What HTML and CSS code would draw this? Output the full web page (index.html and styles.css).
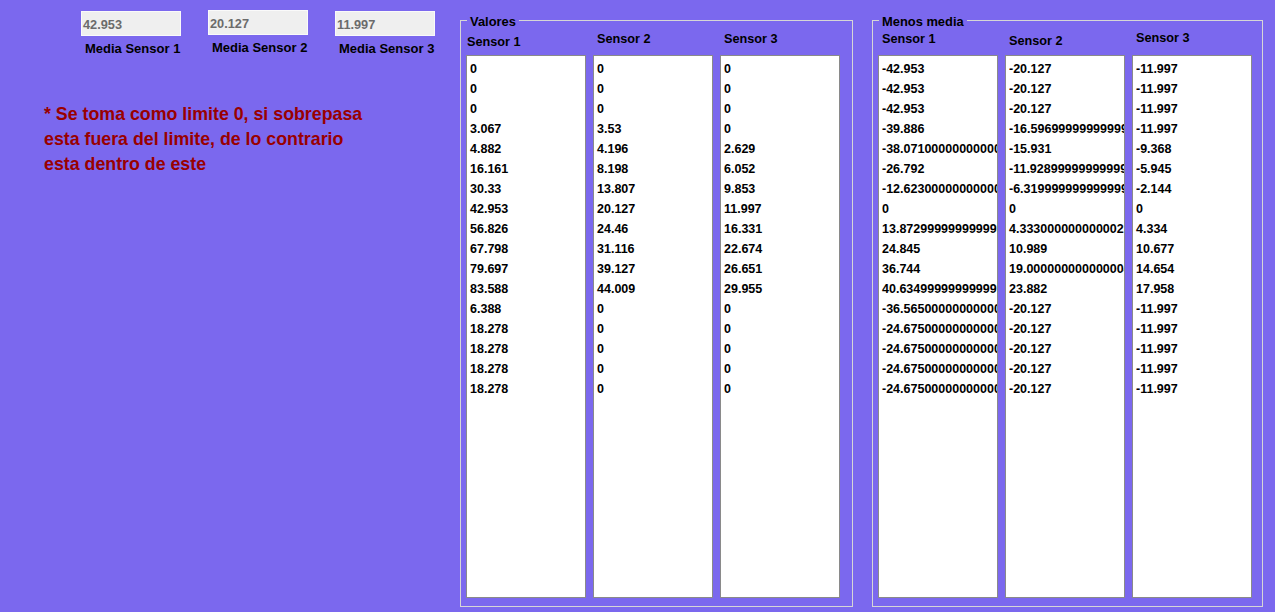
FILE: index.html
```html
<!DOCTYPE html>
<html lang="es">
<head>
<meta charset="utf-8">
<title>Sensores</title>
<link rel="stylesheet" href="styles.css">
</head>
<body>
<div class="app">
  <section class="means">
    <div class="mean-fields">
      <div class="mean">
        <div class="field">42.953</div>
        <div class="mean-label">Media Sensor 1</div>
      </div>
      <div class="mean">
        <div class="field field--up">20.127</div>
        <div class="mean-label">Media Sensor 2</div>
      </div>
      <div class="mean">
        <div class="field">11.997</div>
        <div class="mean-label">Media Sensor 3</div>
      </div>
    </div>
    <p class="note">* Se toma como limite 0, si sobrepasa<br>esta fuera del limite, de lo contrario<br>esta dentro de este</p>
  </section>

  <fieldset class="group group--values">
    <legend class="group-title">Valores</legend>
    <div class="cols">
      <div class="col">
        <div class="col-head col-head--first">Sensor 1</div>
        <div class="list">
          <div>0</div><div>0</div><div>0</div><div>3.067</div><div>4.882</div><div>16.161</div><div>30.33</div><div>42.953</div><div>56.826</div><div>67.798</div><div>79.697</div><div>83.588</div><div>6.388</div><div>18.278</div><div>18.278</div><div>18.278</div><div>18.278</div>
        </div>
      </div>
      <div class="col">
        <div class="col-head">Sensor 2</div>
        <div class="list">
          <div>0</div><div>0</div><div>0</div><div>3.53</div><div>4.196</div><div>8.198</div><div>13.807</div><div>20.127</div><div>24.46</div><div>31.116</div><div>39.127</div><div>44.009</div><div>0</div><div>0</div><div>0</div><div>0</div><div>0</div>
        </div>
      </div>
      <div class="col">
        <div class="col-head">Sensor 3</div>
        <div class="list">
          <div>0</div><div>0</div><div>0</div><div>0</div><div>2.629</div><div>6.052</div><div>9.853</div><div>11.997</div><div>16.331</div><div>22.674</div><div>26.651</div><div>29.955</div><div>0</div><div>0</div><div>0</div><div>0</div><div>0</div>
        </div>
      </div>
    </div>
  </fieldset>

  <fieldset class="group group--diff">
    <legend class="group-title">Menos media</legend>
    <div class="cols">
      <div class="col">
        <div class="col-head">Sensor 1</div>
        <div class="list">
          <div>-42.953</div><div>-42.953</div><div>-42.953</div><div>-39.886</div><div>-38.071000000000005</div><div>-26.792</div><div>-12.623000000000005</div><div>0</div><div>13.872999999999998</div><div>24.845</div><div>36.744</div><div>40.63499999999999</div><div>-36.565000000000005</div><div>-24.675000000000004</div><div>-24.675000000000004</div><div>-24.675000000000004</div><div>-24.675000000000004</div>
        </div>
      </div>
      <div class="col">
        <div class="col-head col-head--down">Sensor 2</div>
        <div class="list">
          <div>-20.127</div><div>-20.127</div><div>-20.127</div><div>-16.596999999999998</div><div>-15.931</div><div>-11.928999999999998</div><div>-6.319999999999999</div><div>0</div><div>4.333000000000002</div><div>10.989</div><div>19.000000000000004</div><div>23.882</div><div>-20.127</div><div>-20.127</div><div>-20.127</div><div>-20.127</div><div>-20.127</div>
        </div>
      </div>
      <div class="col">
        <div class="col-head col-head--up">Sensor 3</div>
        <div class="list">
          <div>-11.997</div><div>-11.997</div><div>-11.997</div><div>-11.997</div><div>-9.368</div><div>-5.945</div><div>-2.144</div><div>0</div><div>4.334</div><div>10.677</div><div>14.654</div><div>17.958</div><div>-11.997</div><div>-11.997</div><div>-11.997</div><div>-11.997</div><div>-11.997</div>
        </div>
      </div>
    </div>
  </fieldset>
</div>
</body>
</html>
```
FILE: styles.css
```css
html, body {
  margin: 0;
  padding: 0;
}

body {
  background: #7b68ee;
  font-family: "Liberation Sans", Arial, sans-serif;
  font-weight: bold;
  color: #000;
}

.app {
  display: flex;
  align-items: flex-start;
  width: 1275px;
  height: 612px;
  overflow: hidden;
}

/* ---------- left: means ---------- */
.means {
  width: 460px;
  flex: none;
}

.mean-fields {
  display: flex;
  gap: 27px;
  padding: 11px 0 0 81px;
}

.mean {
  width: 100px;
}

.field {
  box-sizing: border-box;
  height: 25px;
  border: 1px solid #fafafa;
  background: #efefef;
  color: #6b6b6b;
  font-size: 12.75px;
  line-height: 22px;
  padding: 2px 0 0 1px;
  overflow: hidden;
}

.field--up {
  margin-top: -1px;
  margin-bottom: 1px;
}

.mean-label {
  margin-top: 5px;
  padding-left: 4px;
  font-size: 13px;
  line-height: 16px;
  white-space: nowrap;
}

.note {
  margin: 45px 0 0;
  padding-left: 44px;
  color: #990000;
  font-size: 17.8px;
  line-height: 25px;
  white-space: nowrap;
}

/* ---------- right: groups ---------- */
.group {
  box-sizing: border-box;
  margin: 10px 0 0;
  padding: 0 12px 8px 5px;
  border: 1px solid #d6d6d6;
  min-width: 0;
  flex: none;
}

.group--values {
  width: 393px;
}

.group--diff {
  width: 391px;
  margin-left: 19px;
  padding-right: 10px;
}

.group-title {
  margin-left: 1px;
  padding: 4px 3px 0;
  font-size: 12.9px;
  line-height: 16px;
}

.cols {
  display: flex;
  gap: 7px;
}

.col {
  width: 120px;
}

.col-head {
  box-sizing: border-box;
  height: 25px;
  padding: 1px 0 0 4px;
  font-size: 12.7px;
  line-height: 16px;
  white-space: nowrap;
}

.col-head--first {
  padding-top: 4px;
  padding-left: 1px;
}

.col-head--down {
  padding-top: 3px;
}

.col-head--up {
  padding-top: 0;
}

.list {
  box-sizing: border-box;
  width: 120px;
  height: 543px;
  border: 1px solid #8a8a8a;
  background: #fff;
  padding: 3px 0 0 3px;
  overflow: hidden;
  white-space: nowrap;
  font-size: 12.5px;
  line-height: 20px;
}
```
